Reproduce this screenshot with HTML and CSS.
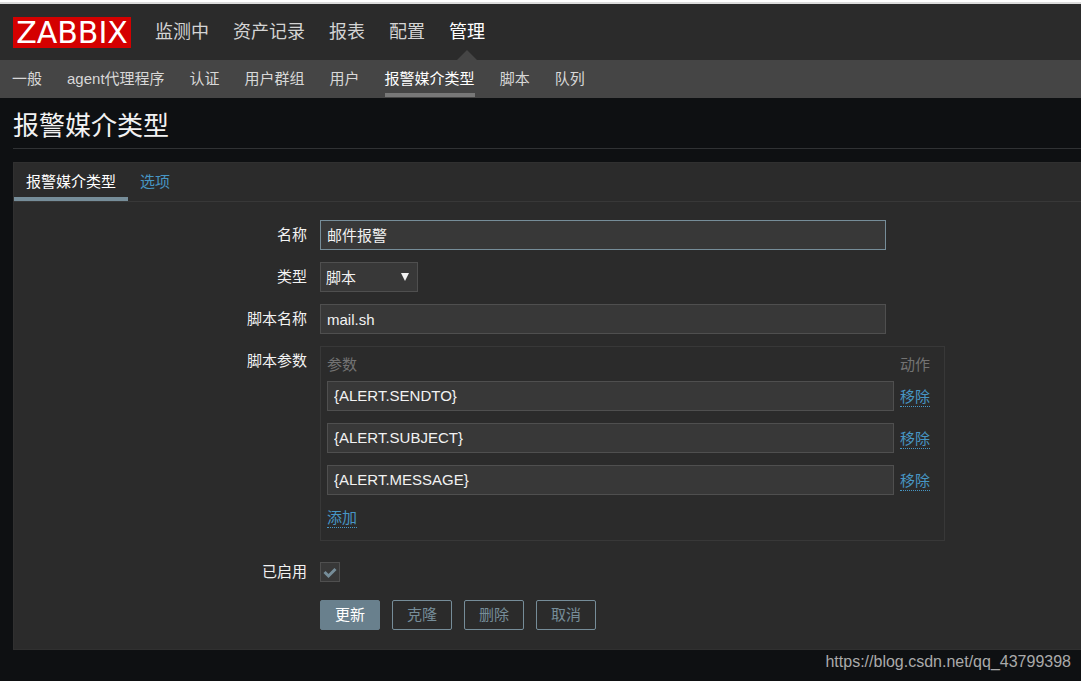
FILE: index.html
```
<!DOCTYPE html>
<html lang="zh-CN">
<head>
<meta charset="utf-8">
<meta name="viewport" content="width=device-width, initial-scale=1">
<title>报警媒介类型</title>
<link rel="stylesheet" href="styles.css">
</head>
<body>
<header class="top">
  <a class="logo" href="#">ZABBIX</a>
  <nav class="main-nav">
    <a href="#">监测中</a>
    <a href="#">资产记录</a>
    <a href="#">报表</a>
    <a href="#">配置</a>
    <a class="active" href="#">管理</a>
  </nav>
</header>
<nav class="sub-nav">
  <a href="#">一般</a>
  <a href="#">agent代理程序</a>
  <a href="#">认证</a>
  <a href="#">用户群组</a>
  <a href="#">用户</a>
  <a class="active" href="#">报警媒介类型</a>
  <a href="#">脚本</a>
  <a href="#">队列</a>
</nav>
<main class="page">
  <h1 class="title">报警媒介类型</h1>
  <form class="panel">
    <div class="tabs">
      <a class="tab selected" href="#">报警媒介类型</a>
      <a class="tab" href="#">选项</a>
    </div>
    <div class="rows">
      <div class="row">
        <label class="label" for="name">名称</label>
        <input class="text focused" id="name" type="text" value="邮件报警">
      </div>
      <div class="row">
        <label class="label" for="type">类型</label>
        <div class="select-box">
          <select class="select" id="type"><option>脚本</option></select>
          <svg class="arrow" viewBox="0 0 8 8" width="8" height="8"><path d="M0 0h8L4 8z"/></svg>
        </div>
      </div>
      <div class="row">
        <label class="label" for="script">脚本名称</label>
        <input class="text" id="script" type="text" value="mail.sh">
      </div>
      <div class="row">
        <span class="label">脚本参数</span>
        <div class="params">
          <table class="table">
            <thead><tr><th>参数</th><th>动作</th></tr></thead>
            <tbody>
              <tr><td><input class="text" type="text" aria-label="参数 1" value="{ALERT.SENDTO}"></td><td><button type="button" class="link">移除</button></td></tr>
              <tr><td><input class="text" type="text" aria-label="参数 2" value="{ALERT.SUBJECT}"></td><td><button type="button" class="link">移除</button></td></tr>
              <tr><td><input class="text" type="text" aria-label="参数 3" value="{ALERT.MESSAGE}"></td><td><button type="button" class="link">移除</button></td></tr>
            </tbody>
          </table>
          <button type="button" class="link">添加</button>
        </div>
      </div>
      <div class="row enabled">
        <label class="label" for="enabled">已启用</label>
        <div class="check-box">
          <input class="check" id="enabled" type="checkbox" checked>
          <svg class="tick" viewBox="0 0 14 12" width="14" height="12"><path d="M1.5 5 5.5 9 12.5 2"/></svg>
        </div>
      </div>
      <div class="row actions">
        <div class="buttons">
          <button type="button" class="btn primary">更新</button>
          <button type="button" class="btn">克隆</button>
          <button type="button" class="btn">删除</button>
          <button type="button" class="btn">取消</button>
        </div>
      </div>
    </div>
  </form>
</main>
<footer class="footer">https://blog.csdn.net/qq_43799398</footer>
</body>
</html>
```
FILE: styles.css
```
* {
  box-sizing: border-box;
}

body {
  margin: 0;
  border-top: 2px solid #fff;
  background: #0e1012;
  color: #f2f2f2;
  font: 15px/20px "Liberation Sans", "Noto Sans CJK SC", sans-serif;
}

a {
  color: inherit;
  text-decoration: none;
}

input,
select,
button {
  margin: 0;
  color: inherit;
  font: inherit;
}

.top {
  display: flex;
  align-items: center;
  gap: 24px;
  height: 58px;
  padding-left: 13px;
  border-top: 2px solid #dcdcdc;
  background: #2b2b2b;
}

.logo {
  width: 118px;
  background: #d40000;
  color: #fff;
  font: 30px/31px "DejaVu Sans", sans-serif;
  text-align: center;
}

.main-nav {
  display: flex;
  gap: 24px;
  align-self: stretch;
  color: #d4d4d4;
  font-size: 18px;
  line-height: 56px;
}

.main-nav .active {
  position: relative;
  color: #fff;
}

.main-nav .active::after {
  content: "";
  position: absolute;
  bottom: 0;
  left: 50%;
  margin-left: -10px;
  border: 10px solid transparent;
  border-top-width: 0;
  border-bottom-color: #454545;
}

.sub-nav {
  display: flex;
  gap: 25px;
  height: 38px;
  padding: 0 12px;
  background: #454545;
  color: #d8d8d8;
  line-height: 38px;
}

.sub-nav .active {
  height: 37px;
  border-bottom: 4px solid #787878;
  color: #fff;
}

.page {
  padding-left: 13px;
}

.title {
  margin: 0 0 13px;
  border-bottom: 1px solid #303234;
  font-size: 26px;
  font-weight: 400;
  line-height: 40px;
  padding: 8px 0 2px;
}

.panel {
  border: 1px solid #303030;
  border-right: 0;
  background: #2b2b2b;
}

.tabs {
  display: flex;
  height: 39px;
  border-bottom: 1px solid #383838;
  line-height: 38px;
}

.tab {
  height: 38px;
  padding: 0 12px;
  color: #4796c4;
}

.tab.selected {
  border-bottom: 4px solid #768d99;
  color: #fff;
}

.rows {
  display: flex;
  flex-direction: column;
  gap: 12px;
  padding: 18px 12px 19px 0;
}

.row {
  display: grid;
  grid-template-columns: 293px minmax(0, 1fr);
  column-gap: 13px;
}

.label {
  padding-top: 5px;
  text-align: right;
}

.text {
  width: 100%;
  max-width: 566px;
  height: 30px;
  padding: 0 6px;
  border: 1px solid #4f4f4f;
  background: #383838;
  outline: 0;
}

.text.focused {
  padding-bottom: 2px;
  border-color: #768d99;
}

.select-box {
  position: relative;
  width: 98px;
}

.select {
  display: block;
  width: 100%;
  height: 30px;
  padding: 2px 5px 0;
  border: 1px solid #4f4f4f;
  border-radius: 0;
  background: #383838;
  appearance: none;
}

.arrow {
  position: absolute;
  top: 11px;
  right: 9px;
  fill: #f2f2f2;
  pointer-events: none;
}

.params {
  max-width: 625px;
  padding: 5px 6px 12px;
  border: 1px solid #383838;
}

.table {
  width: 100%;
  border-collapse: collapse;
}

.table th {
  height: 29px;
  padding: 0 0 4px;
  color: #737373;
  font-weight: 400;
  text-align: left;
}

.table td {
  height: 42px;
  padding: 0 6px 12px 0;
}

.table td .text {
  display: block;
  max-width: none;
  padding-bottom: 2px;
}

.table td:last-child,
.table th:last-child {
  width: 38px;
  padding-right: 0;
}

.link {
  display: block;
  padding: 2px 0 0;
  border: 0;
  border-bottom: 1px dotted #4796c4;
  background: none;
  color: #4796c4;
  line-height: 18px;
}

.enabled {
  margin-top: 9px;
}

.enabled .label {
  padding: 0;
}

.check-box {
  position: relative;
  width: 20px;
  height: 20px;
}

.check {
  display: block;
  width: 20px;
  height: 20px;
  border: 1px solid #4f4f4f;
  background: #383838;
  appearance: none;
}

.tick {
  position: absolute;
  top: 5px;
  left: 3px;
  fill: none;
  stroke: #768d99;
  stroke-width: 3;
  pointer-events: none;
}

.actions {
  margin-top: 6px;
}

.buttons {
  display: flex;
  grid-column: 2;
  gap: 12px;
}

.btn {
  width: 60px;
  height: 30px;
  padding: 0;
  border: 1px solid #768d99;
  border-radius: 2px;
  background: none;
  color: #768d99;
}

.btn.primary {
  border-color: #69808d;
  background: #69808d;
  color: #fff;
}

.footer {
  padding: 2px 10px 0;
  color: #aaa;
  font-size: 16px;
  text-align: right;
}
```
